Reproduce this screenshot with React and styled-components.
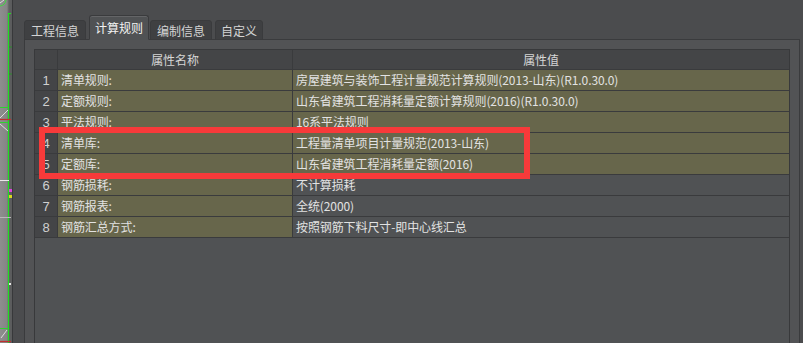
import React from "react";
import styled, { createGlobalStyle } from "styled-components";

const GlobalStyle = createGlobalStyle`
  html, body { margin: 0; padding: 0; }
  body {
    background: #4b4c4e;
    font-family: "Noto Sans CJK SC", "Noto Sans", sans-serif;
    font-size: 12px;
    color: #e4e4e4;
    overflow: hidden;
  }
`;

const Screen = styled.div`
  display: flex;
  width: 803px;
  height: 343px;
  overflow: hidden;
`;

const CanvasStrip = styled.div`
  width: 12px;
  flex: none;
  border-right: 1px solid #38393b;
  background: linear-gradient(90deg, #8e8e8e 0, #858585 7px, #5e5f60 9px, #5a5b5c 12px);
  svg { display: block; }
`;

const Panel = styled.div`
  flex: 1;
  display: flex;
  flex-direction: column;
  padding: 16px 3px 0 11px;
  min-width: 0;
`;

const TabBar = styled.div`
  display: flex;
  align-items: flex-end;
  gap: 1px;
  height: 24px;
  position: relative;
  z-index: 1;
  margin-bottom: -1px;
`;

const Tab = styled.div`
  box-sizing: border-box;
  height: ${(p) => (p.$active ? "25px" : "20px")};
  padding: 0 ${(p) => (p.$pad || 6)}px;
  margin-right: ${(p) => (p.$gap || 0)}px;
  display: flex;
  align-items: center;
  border: 1px solid #3a3b3d;
  border-bottom: ${(p) => (p.$active ? "1px solid #505254" : "1px solid #3a3b3d")};
  border-radius: 3px 3px 0 0;
  background: ${(p) => (p.$active ? "#505254" : "#3f4042")};
  color: ${(p) => (p.$active ? "#f2f2f2" : "#d4d4d4")};
  font-size: 12px;
  line-height: 1;
  padding-top: ${(p) => (p.$active ? "0" : "1px")};
  box-shadow: ${(p) => (p.$active ? "inset 0 1px 0 #646567" : "none")};
`;

const Pane = styled.div`
  flex: 1;
  display: flex;
  flex-direction: column;
  border: 1px solid #3a3b3d;
  border-bottom: none;
  background: #525355;
  padding: 9px 9px 0 9px;
  min-height: 0;
`;

const Grid = styled.div`
  position: relative;
  flex: 1;
  border-left: 1px solid #38393b;
  border-top: 1px solid #38393b;
  border-right: 1px solid #38393b;
  background: #505254;
`;

const Row = styled.div`
  display: grid;
  grid-template-columns: 23px 235px 1fr;
  height: ${(p) => (p.$header ? "20px" : "21px")};
`;

const Cell = styled.div`
  box-sizing: border-box;
  border-bottom: 1px solid #3a3b3d;
  border-right: ${(p) => (p.$last ? "none" : "1px solid #3a3b3d")};
  display: flex;
  align-items: center;
  justify-content: ${(p) => (p.$center ? "center" : "flex-start")};
  padding-left: ${(p) => (p.$center ? "0" : "3px")};
  background: ${(p) => p.$bg};
  color: ${(p) => p.$color || "#e2e2e2"};
  font-size: 12px;
  white-space: nowrap;
  overflow: hidden;
  line-height: 1;
  letter-spacing: -0.1px;
`;

const NumText = styled.span`
  font-family: "Liberation Sans", "Noto Sans", sans-serif;
  font-size: 13px;
  color: #d0d0d0;
`;

const Highlight = styled.div`
  position: absolute;
  left: 4px;
  top: 77px;
  width: 491px;
  height: 52px;
  box-sizing: border-box;
  border: 6px solid #f73a3a;
  pointer-events: none;
`;

const OLIVE = "#67664b";
const GREY = "#505254";
const HEAD = "#444547";

const rows = [
  ["清单规则:", "房屋建筑与装饰工程计量规范计算规则(2013-山东)(R1.0.30.0)", true],
  ["定额规则:", "山东省建筑工程消耗量定额计算规则(2016)(R1.0.30.0)", true],
  ["平法规则:", "16系平法规则", true],
  ["清单库:", "工程量清单项目计量规范(2013-山东)", true],
  ["定额库:", "山东省建筑工程消耗量定额(2016)", true],
  ["钢筋损耗:", "不计算损耗", false],
  ["钢筋报表:", "全统(2000)", false],
  ["钢筋汇总方式:", "按照钢筋下料尺寸-即中心线汇总", false],
];

const tabs = [
  { label: "工程信息", pad: 6, gap: 2 },
  { label: "计算规则", pad: 5, active: true },
  { label: "编制信息", pad: 6, gap: 2 },
  { label: "自定义", pad: 5 },
];

function CadCanvas() {
  return (
    <svg width="12" height="343" viewBox="0 0 12 343">
      <path d="M0 6 A7 7 0 0 0 6 0" stroke="#3fd83f" strokeWidth="1" fill="none" />
      <path d="M0 3 L4 0" stroke="#ddd" strokeWidth="1" />
      <line x1="8.5" y1="13" x2="8.5" y2="343" stroke="#20e020" strokeWidth="1.2" />
      <line x1="8" y1="13.5" x2="11" y2="13.5" stroke="#20e020" />
      <line x1="9" y1="47" x2="12" y2="47" stroke="#2a8a2a" />
      <line x1="9" y1="74" x2="12" y2="74" stroke="#2a8a2a" />
      <line x1="0" y1="107.5" x2="8" y2="107.5" stroke="#30d030" />
      <line x1="0" y1="122.5" x2="8" y2="122.5" stroke="#30d030" />
      <path d="M0 118 L8 110 M0 124 L8 131" stroke="#e6e6e6" strokeWidth="0.9" fill="none" />
      <line x1="0" y1="119.5" x2="11" y2="119.5" stroke="#c03030" strokeWidth="1.2" />
      <line x1="0" y1="180.5" x2="9" y2="180.5" stroke="#e8e8e8" />
      <rect x="9" y="189" width="3" height="3" fill="#e040e0" />
      <rect x="9" y="195" width="3" height="3" fill="#d8d820" />
      <line x1="0" y1="217.5" x2="11" y2="217.5" stroke="#b8b8b8" />
      <rect x="9" y="283" width="2" height="2" fill="#e8e8e8" />
      <line x1="0" y1="328.5" x2="8" y2="328.5" stroke="#30d030" />
      <path d="M1 338 L7 330" stroke="#e6e6e6" strokeWidth="0.9" />
      <line x1="0" y1="341.5" x2="11" y2="341.5" stroke="#c03030" strokeWidth="1.2" />
    </svg>
  );
}

export default function App() {
  return (
    <>
      <GlobalStyle />
      <Screen>
        <CanvasStrip>
          <CadCanvas />
        </CanvasStrip>
        <Panel>
          <TabBar>
            {tabs.map((t) => (
              <Tab key={t.label} $active={t.active} $pad={t.pad} $gap={t.gap}>
                {t.label}
              </Tab>
            ))}
          </TabBar>
          <Pane>
            <Grid>
              <Row $header>
                <Cell $bg={HEAD} />
                <Cell $bg={HEAD} $center $color="#d6d6d6">属性名称</Cell>
                <Cell $bg={HEAD} $center $last $color="#d6d6d6">属性值</Cell>
              </Row>
              {rows.map(([name, value, olive], i) => (
                <Row key={name}>
                  <Cell $bg={HEAD} $center>
                    <NumText>{i + 1}</NumText>
                  </Cell>
                  <Cell $bg={OLIVE}>{name}</Cell>
                  <Cell $bg={olive ? OLIVE : GREY} $last>{value}</Cell>
                </Row>
              ))}
              <Highlight />
            </Grid>
          </Pane>
        </Panel>
      </Screen>
    </>
  );
}
